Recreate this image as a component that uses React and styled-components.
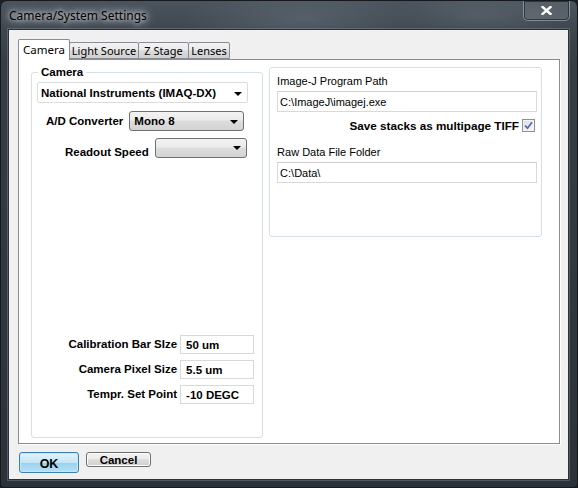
import React from 'react';
import styled, { createGlobalStyle } from 'styled-components';

const GlobalStyle = createGlobalStyle`
  html, body {
    margin: 0;
    padding: 0;
    overflow: hidden;
    background: #1d2126;
  }
`;

const SANS = `"Liberation Sans", Arial, sans-serif`;
const UI = `"Noto Sans", "Liberation Sans", sans-serif`;

const Frame = styled.div`
  box-sizing: border-box;
  width: 578px;
  height: 488px;
  display: flex;
  flex-direction: column;
  padding: 0 8px 7px 7px;
  border-radius: 7px 7px 4px 4px;
  border: 1px solid #15181c;
  background:
    radial-gradient(ellipse 120px 30px at 300px 18px, rgba(120, 132, 144, 0.35), transparent),
    radial-gradient(ellipse 90px 24px at 480px 14px, rgba(120, 132, 144, 0.3), transparent),
    linear-gradient(180deg, #4b545d 0px, #3f474f 28px, #363d45 60px, #2c3238 100%);
`;

const TitleBar = styled.div`
  height: 28px;
  flex-shrink: 0;
  display: flex;
  align-items: flex-start;
  justify-content: space-between;
`;

const Title = styled.span`
  margin: 7px 0 0 1px;
  font-family: ${UI};
  font-size: 12px;
  line-height: 16px;
  color: #000;
  text-shadow: 0 0 8px rgba(235, 238, 242, 0.9), 0 0 4px rgba(235, 238, 242, 0.8),
    0 0 12px rgba(220, 225, 230, 0.7);
`;

const CloseButton = styled.div`
  box-sizing: border-box;
  width: 47px;
  height: 20px;
  margin-right: -1px;
  display: flex;
  align-items: center;
  justify-content: center;
  border: 1px solid rgba(170, 180, 190, 0.55);
  border-top: none;
  border-radius: 0 0 5px 5px;
  background: linear-gradient(180deg, rgba(255, 255, 255, 0.06), rgba(255, 255, 255, 0.12));
  box-shadow: inset 0 0 0 1px rgba(20, 24, 28, 0.6);
`;

const Client = styled.div`
  flex: 1;
  display: flex;
  flex-direction: column;
  padding: 9px 8px 6px 9px;
  background: #f0f0f0;
  border: 1px solid #2b3137;
  box-shadow: 0 0 0 1px rgba(150, 160, 170, 0.35);
`;

const TabBar = styled.div`
  display: flex;
  flex-shrink: 0;
  align-items: flex-end;
  height: 20px;
  position: relative;
  z-index: 1;
`;

const Tab = styled.div`
  box-sizing: border-box;
  width: ${(p) => p.$w}px;
  height: ${(p) => (p.$active ? 21 : 17)}px;
  margin-bottom: ${(p) => (p.$active ? -1 : 0)}px;
  margin-left: ${(p) => (p.$first ? 0 : -1)}px;
  display: flex;
  align-items: center;
  justify-content: center;
  padding-bottom: ${(p) => (p.$active ? 2 : 0)}px;
  border: 1px solid #898c95;
  border-bottom: ${(p) => (p.$active ? 'none' : '1px solid #898c95')};
  border-radius: 2px 2px 0 0;
  background: ${(p) =>
    p.$active
      ? '#ffffff'
      : 'linear-gradient(180deg, #f2f2f2 0%, #ebebeb 50%, #dddddd 50%, #cfcfcf 100%)'};
  font-family: ${UI};
  font-size: ${(p) => (p.$active ? 11.5 : 11)}px;
  color: #000;
  position: relative;
  z-index: ${(p) => (p.$active ? 2 : 1)};
`;

const Panel = styled.div`
  box-sizing: border-box;
  height: 385px;
  flex-shrink: 0;
  display: flex;
  align-items: flex-start;
  gap: 6px;
  padding: 7px 17px 0 12px;
  background: #fff;
  border: 1px solid #898c95;
  box-shadow: 1px 1px 0 #ffffff;
`;

const GroupBox = styled.div`
  box-sizing: border-box;
  position: relative;
  display: flex;
  flex-direction: column;
  border: 1px solid #d5dfe5;
  border-radius: 3px;
  width: ${(p) => p.$w}px;
  height: ${(p) => p.$h}px;
  margin-top: ${(p) => p.$top || 0}px;
`;

const Legend = styled.span`
  position: absolute;
  top: -8px;
  left: 6px;
  padding: 0 3px;
  background: #fff;
  font-family: ${SANS};
  font-weight: bold;
  font-size: 11.5px;
  line-height: 14px;
  color: #000;
`;

const LeftBody = styled.div`
  flex: 1;
  display: flex;
  flex-direction: column;
  padding: 9px 8px 33px 5px;
`;

const Combo = styled.div`
  box-sizing: border-box;
  width: ${(p) => p.$w}px;
  height: ${(p) => p.$h || 20}px;
  display: flex;
  align-items: center;
  padding: 0 5px 0 ${(p) => (p.$flat ? 3 : 4)}px;
  border: 1px solid ${(p) => (p.$flat ? '#dcdcdc' : '#707070')};
  border-radius: ${(p) => (p.$flat ? 2 : 3)}px;
  background: ${(p) =>
    p.$flat
      ? '#ffffff'
      : 'linear-gradient(180deg, #f2f2f2 0%, #ebebeb 45%, #dddddd 50%, #d3d3d3 100%)'};
  font-family: ${SANS};
  font-weight: bold;
  font-size: 11.5px;
  color: #000;
  white-space: nowrap;
`;

const Arrow = styled.span`
  margin-left: auto;
  margin-top: ${(p) => (p.$flat ? 3 : 1)}px;
  width: 0;
  height: 0;
  border-left: 4px solid transparent;
  border-right: 4px solid transparent;
  border-top: 4px solid #000;
`;

const ComboRow = styled.div`
  display: flex;
  align-items: center;
  gap: 6px;
  margin-top: ${(p) => p.$top}px;
  padding-left: ${(p) => p.$indent}px;
`;

const BoldLabel = styled.span`
  font-family: ${SANS};
  font-weight: bold;
  font-size: 11.5px;
  line-height: 14px;
  color: #000;
  white-space: nowrap;
  margin-top: ${(p) => p.$dy || 0}px;
`;

const FieldGrid = styled.div`
  margin-top: auto;
  display: grid;
  grid-template-columns: 1fr 74px;
  column-gap: 3px;
  row-gap: 6px;
  align-items: center;
`;

const FieldLabel = styled(BoldLabel)`
  text-align: right;
  margin-top: -2px;
`;

const ValueBox = styled.div`
  box-sizing: border-box;
  height: 19px;
  display: flex;
  align-items: center;
  padding: 1px 5px 0;
  border: 1px solid #d9d9d9;
  background: #fff;
  font-family: ${SANS};
  font-weight: bold;
  font-size: 11.5px;
  color: #000;
`;

const RightBody = styled.div`
  display: flex;
  flex-direction: column;
  padding: 6px 4px 0 7px;
`;

const PlainLabel = styled.span`
  font-family: ${SANS};
  font-size: 11px;
  line-height: 14px;
  color: #000;
  margin-top: ${(p) => p.$top || 0}px;
`;

const TextBox = styled.div`
  box-sizing: border-box;
  height: 21px;
  margin-top: 3px;
  display: flex;
  align-items: center;
  padding: 0 2px;
  border: 1px solid #d9d9d9;
  border-top-color: #cfcfcf;
  background: #fff;
  font-family: ${SANS};
  font-size: 11px;
  color: #000;
`;

const CheckRow = styled.label`
  display: flex;
  justify-content: flex-end;
  align-items: center;
  gap: 3px;
  margin-top: 7px;
  padding-right: 2px;
  height: 13px;
`;

const CheckText = styled(BoldLabel)`
  font-size: 11.7px;
`;

const CheckBox = styled.span`
  box-sizing: border-box;
  width: 13px;
  height: 13px;
  display: flex;
  align-items: center;
  justify-content: center;
  border: 1px solid #8f8f8f;
  background: linear-gradient(135deg, #d8dce2 0%, #eef0f3 60%, #fbfbfb 100%);
  box-shadow: inset 0 0 0 1px #f4f4f4;
`;

const ButtonRow = styled.div`
  display: flex;
  flex-shrink: 0;
  align-items: flex-start;
  gap: 7px;
  margin-top: 8px;
  padding-left: 1px;
`;

const Button = styled.div`
  box-sizing: border-box;
  width: ${(p) => p.$w}px;
  height: ${(p) => p.$h}px;
  display: flex;
  align-items: center;
  justify-content: center;
  border-radius: 3px;
  font-family: ${SANS};
  font-weight: bold;
  font-size: ${(p) => (p.$primary ? 12.5 : 11.5)}px;
  color: #000;
  border: 1px solid ${(p) => (p.$primary ? '#3c7fb1' : '#707070')};
  background: ${(p) =>
    p.$primary
      ? 'linear-gradient(180deg, #e5f4fc 0%, #c4e5f6 50%, #98d1ef 50%, #b7e0f5 100%)'
      : 'linear-gradient(180deg, #f2f2f2 0%, #ebebeb 50%, #dddddd 50%, #cfcfcf 100%)'};
  box-shadow: inset 0 0 0 1px ${(p) => (p.$primary ? '#c4e8fb' : '#fbfbfb')};
  padding-top: ${(p) => (p.$primary ? 2 : 0)}px;
`;

const tabs = [
  { label: 'Camera', w: 52, active: true },
  { label: 'Light Source', w: 70 },
  { label: 'Z Stage', w: 51 },
  { label: 'Lenses', w: 42 },
];

const fields = [
  { label: 'Calibration Bar SIze', value: '50 um' },
  { label: 'Camera Pixel Size', value: '5.5 um' },
  { label: 'Tempr. Set Point', value: '-10 DEGC' },
];

export default function App() {
  return (
    <>
      <GlobalStyle />
      <Frame>
        <TitleBar>
          <Title>Camera/System Settings</Title>
          <CloseButton>
            <svg width="11" height="9" viewBox="0 0 11 9">
              <path d="M1.5 1 L9.5 8 M9.5 1 L1.5 8" stroke="#fff" strokeWidth="2.4" strokeLinecap="square" />
            </svg>
          </CloseButton>
        </TitleBar>
        <Client>
          <TabBar>
            {tabs.map((t, i) => (
              <Tab key={t.label} $w={t.w} $active={t.active} $first={i === 0}>
                {t.label}
              </Tab>
            ))}
          </TabBar>
          <Panel>
            <GroupBox $w={233} $h={366} $top={5}>
              <Legend>Camera</Legend>
              <LeftBody>
                <Combo $flat $w={211} $h={21}>
                  National Instruments (IMAQ-DX)
                  <Arrow $flat />
                </Combo>
                <ComboRow $top={8} $indent={9}>
                  <BoldLabel>A/D Converter</BoldLabel>
                  <Combo $w={115}>
                    Mono 8
                    <Arrow />
                  </Combo>
                </ComboRow>
                <ComboRow $top={5} $indent={28}>
                  <BoldLabel $dy={9}>Readout Speed</BoldLabel>
                  <Combo $w={92}>
                    <Arrow />
                  </Combo>
                </ComboRow>
                <FieldGrid>
                  {fields.map((f) => (
                    <React.Fragment key={f.label}>
                      <FieldLabel>{f.label}</FieldLabel>
                      <ValueBox>{f.value}</ValueBox>
                    </React.Fragment>
                  ))}
                </FieldGrid>
              </LeftBody>
            </GroupBox>
            <GroupBox $w={274} $h={170}>
              <RightBody>
                <PlainLabel>Image-J Program Path</PlainLabel>
                <TextBox>C:\ImageJ\imagej.exe</TextBox>
                <CheckRow>
                  <CheckText>Save stacks as multipage TIFF</CheckText>
                  <CheckBox>
                    <svg width="9" height="9" viewBox="0 0 9 9">
                      <path d="M1 4.5 L3.5 7.2 L8 1.2" fill="none" stroke="#5b6f9e" strokeWidth="1.8" />
                    </svg>
                  </CheckBox>
                </CheckRow>
                <PlainLabel $top={13}>Raw Data File Folder</PlainLabel>
                <TextBox>C:\Data\</TextBox>
              </RightBody>
            </GroupBox>
          </Panel>
          <ButtonRow>
            <Button $primary $w={60} $h={21}>OK</Button>
            <Button $w={65} $h={15}>Cancel</Button>
          </ButtonRow>
        </Client>
      </Frame>
    </>
  );
}
